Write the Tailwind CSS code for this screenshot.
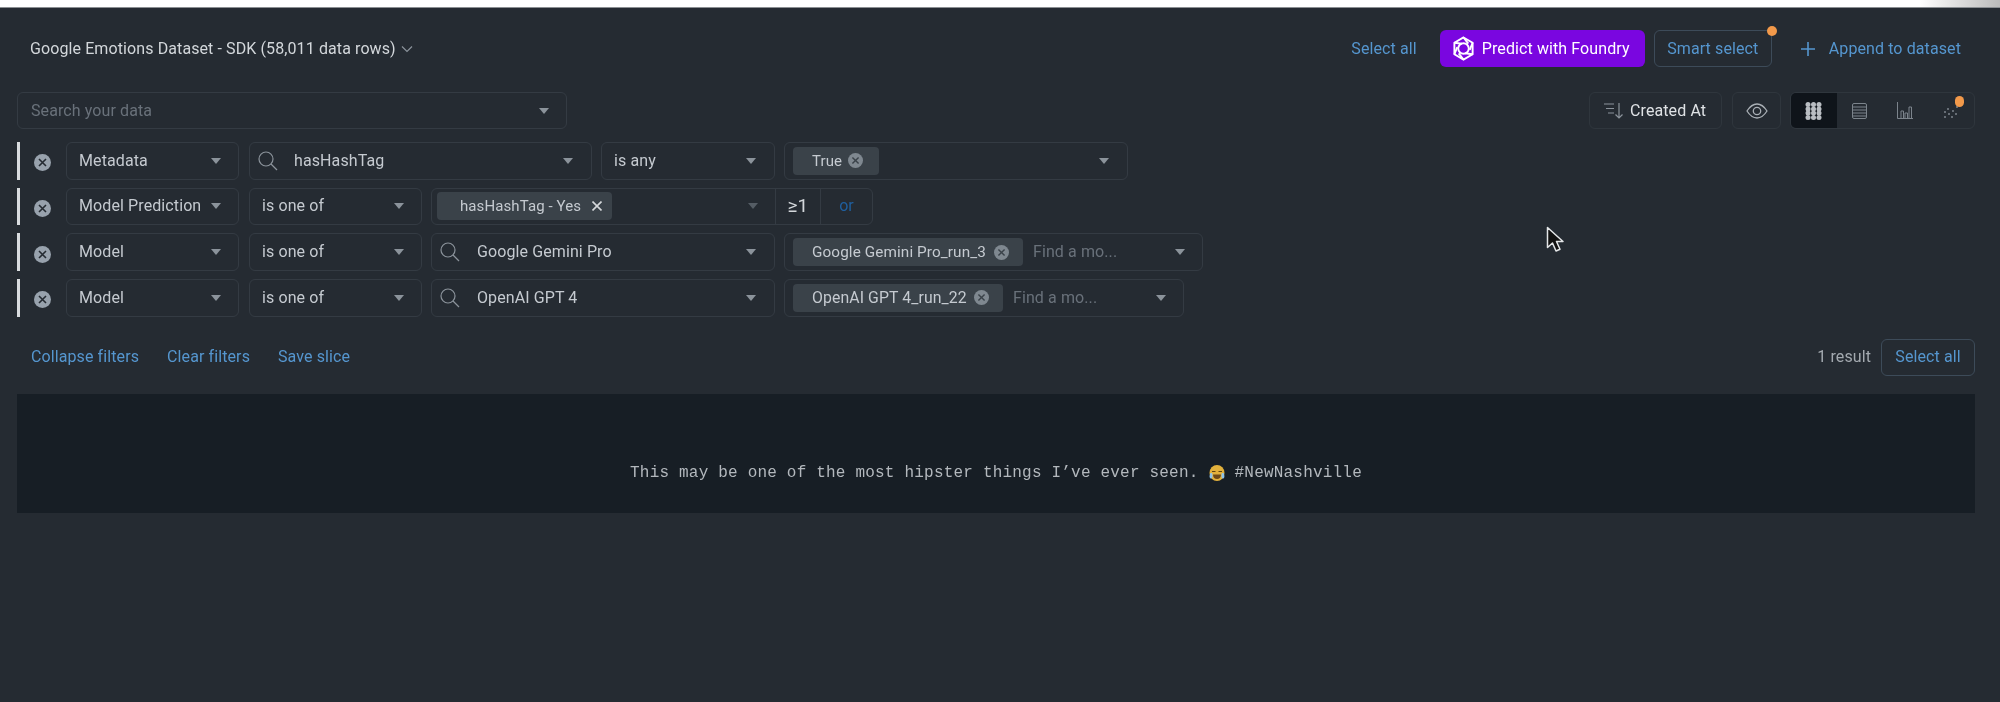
<!DOCTYPE html>
<html lang="en">
<head>
  <meta charset="UTF-8">
  <title>Google Emotions Dataset</title>
  <script src="https://cdn.jsdelivr.net/npm/@tailwindcss/browser@4"></script>
</head>
<body class="bg-[#252b32]">
  <div class="w-[2000px] h-[702px] overflow-hidden relative flex flex-col bg-[#252b32] font-['Roboto',sans-serif] text-[16px] tracking-[0.1px] text-[#c5cad0] blur-[0.4px]">
    <!-- top strip -->
    <div class="h-[8px] shrink-0 bg-gradient-to-r from-white from-[96%] to-[#bbbbbb] border-b border-[#8b8f93]"></div>

    <!-- header -->
    <div class="mt-[22px] h-[37px] flex items-center pl-[30px] pr-[39px]">
      <div class="flex items-center gap-[5px] text-[#d3d7db]">
        <span>Google Emotions Dataset - SDK (58,011 data rows)</span>
        <svg class="w-[12px] h-[8px] text-[#8b939b]" viewBox="0 0 12 8" fill="none" stroke="currentColor" stroke-width="1.2"><path d="M1 1.500l5 5 5-5"/></svg>
      </div>
      <div class="ml-auto flex items-center">
        <span class="text-[#5596cf]">Select all</span>
        <div class="ml-[23px] w-[205px] h-[37px] rounded-[6px] bg-[#7a06e0] flex items-center pl-[12px] gap-[7px] text-white">
          <svg class="w-[23px] h-[25px]" viewBox="0 0 24 26" fill="none" stroke="currentColor" stroke-width="2"><path d="M12 1.500l9.500 5.500v12L12 24.500 2.500 19V7z"/><circle cx="12" cy="13" r="5.500"/><path d="M12 1.500L17 8M21.500 7l-3 7.500M21.500 19l-8-1M12 24.500L7 18M2.500 19l3-7.500M2.500 7l8 1"/></svg>
          <span>Predict with Foundry</span>
        </div>
        <div class="ml-[9px] relative w-[118px] h-[37px] rounded-[6px] border border-[#3d4b59] flex items-center justify-center text-[#5596cf]">
          Smart select
          <span class="absolute -top-[5px] -right-[6px] w-[10px] h-[10px] rounded-full bg-[#f2994a]"></span>
        </div>
        <svg class="ml-[29px] w-[14px] h-[14px] text-[#5596cf]" viewBox="0 0 14 14" fill="none" stroke="currentColor" stroke-width="1.6"><path d="M7 0v14M0 7h14"/></svg>
        <span class="ml-[14px] text-[#5596cf]">Append to dataset</span>
      </div>
    </div>

    <!-- search row -->
    <div class="mt-[25px] h-[37px] flex items-center pl-[17px] pr-[25px]">
      <div class="w-[550px] h-[37px] rounded-[6px] border border-[#343b43] flex items-center pl-[13px] pr-[17px] justify-between text-[#69717a]">
        <span>Search your data</span>
        <svg class="w-[10px] h-[6px] text-[#8b939b]" viewBox="0 0 10 6" fill="currentColor"><path d="M0 0h10L5 6z"/></svg>
      </div>
      <div class="ml-auto w-[133px] h-[37px] rounded-[6px] border border-[#2f363d] flex items-center pl-[13px] gap-[6px] text-[#dfe2e5]">
        <svg class="w-[21px] h-[18px] text-[#8b939b]" viewBox="0 0 21 18" fill="none" stroke="currentColor" stroke-width="1.200"><path d="M1 2h10M3 6.500h8M5 11h6M16 1v15M12.500 12.500l3.500 3.500 3.500-3.500"/></svg>
        <span>Created At</span>
      </div>
      <div class="ml-[10px] w-[49px] h-[37px] rounded-[6px] border border-[#2f363d] flex items-center justify-center">
        <svg class="w-[22px] h-[16px] text-[#aab0b6]" viewBox="0 0 22 16" fill="none" stroke="currentColor" stroke-width="1.300"><path d="M1 8c3-4.700 6.300-7 10-7s7 2.300 10 7c-3 4.700-6.300 7-10 7S4 12.700 1 8z"/><circle cx="11" cy="8" r="3.700"/></svg>
      </div>
      <div class="ml-[9px] w-[185px] h-[37px] rounded-[6px] border border-[#2f363d] flex items-center overflow-hidden relative">
        <div class="w-[46px] h-full bg-[#0f141a] flex items-center justify-center">
          <svg class="w-[17px] h-[18px] text-[#b9bdc2]" viewBox="0 0 17 18" fill="currentColor"><circle cx="3" cy="2.500" r="2.500"/><circle cx="8.500" cy="2.500" r="2.500"/><circle cx="14" cy="2.500" r="2.500"/><circle cx="3" cy="7" r="2.500"/><circle cx="8.500" cy="7" r="2.500"/><circle cx="14" cy="7" r="2.500"/><circle cx="3" cy="11" r="2.500"/><circle cx="8.500" cy="11" r="2.500"/><circle cx="14" cy="11" r="2.500"/><circle cx="3" cy="15.500" r="2.500"/><circle cx="8.500" cy="15.500" r="2.500"/><circle cx="14" cy="15.500" r="2.500"/></svg>
        </div>
        <div class="w-[46px] flex justify-center">
          <svg class="w-[15px] h-[16px] text-[#7c848c]" viewBox="0 0 15 16" fill="none" stroke="currentColor" stroke-width="1"><rect x=".5" y=".5" width="14" height="15" rx="1.500"/><path d="M1 4h13M1 7h13M1 10h13M1 13h13"/></svg>
        </div>
        <div class="w-[46px] flex justify-center">
          <svg class="w-[16px] h-[17px] text-[#7c848c]" viewBox="0 0 16 17" fill="none" stroke="currentColor" stroke-width="1"><path d="M.5 0v16.500H16M4 16V9h2.500v7M8 16v-5h2.500v5M12 16V5h2.500v11"/></svg>
        </div>
        <div class="w-[46px] flex justify-center">
          <svg class="w-[16px] h-[17px] text-[#7c848c]" viewBox="0 0 16 17" fill="currentColor"><circle cx="2" cy="10" r="1"/><circle cx="2" cy="15" r="1"/><circle cx="5" cy="7" r="1"/><circle cx="6" cy="12" r="1"/><circle cx="9" cy="15" r="1"/><circle cx="10" cy="9" r="1"/><circle cx="13" cy="12" r="1"/><circle cx="14" cy="5" r="1"/></svg>
        </div>
        <span class="absolute top-[3px] right-[10px] w-[9px] h-[11px] rounded-full bg-[#f2994a]"></span>
      </div>
    </div>

    <!-- filters -->
    <div class="mt-[13px] flex flex-col gap-[8.2px] pl-[17px]">
      <!-- row 1 -->
      <div class="h-[37.5px] flex items-center">
        <div class="w-[3px] h-full bg-[#d9dcdf]"></div>
        <svg class="ml-[14px] mt-[4px] w-[17px] h-[17px]" viewBox="0 0 17 17"><circle cx="8.500" cy="8.500" r="8.500" fill="#98a2ad"/><path d="M5 5l7 7M12 5l-7 7" stroke="#252b32" stroke-width="1.600"/></svg>
        <div class="ml-[15px] w-[173px] h-full rounded-[6px] border border-[#343b43] flex items-center justify-between pl-[12px] pr-[17px]">
          <span>Metadata</span>
          <svg class="w-[10px] h-[6px] text-[#8b939b]" viewBox="0 0 10 6" fill="currentColor"><path d="M0 0h10L5 6z"/></svg>
        </div>
        <div class="ml-[10px] w-[343px] h-full rounded-[6px] border border-[#343b43] flex items-center pl-[8px] pr-[18px]">
          <svg class="w-[20px] h-[20px] text-[#8b939b]" viewBox="0 0 20 20" fill="none" stroke="currentColor" stroke-width="1.200"><circle cx="8" cy="8" r="7"/><path d="M13 13l6 6"/></svg>
          <span class="ml-[16px]">hasHashTag</span>
          <svg class="ml-auto w-[10px] h-[6px] text-[#8b939b]" viewBox="0 0 10 6" fill="currentColor"><path d="M0 0h10L5 6z"/></svg>
        </div>
        <div class="ml-[9px] w-[174px] h-full rounded-[6px] border border-[#343b43] flex items-center justify-between pl-[12px] pr-[18px]">
          <span>is any</span>
          <svg class="w-[10px] h-[6px] text-[#8b939b]" viewBox="0 0 10 6" fill="currentColor"><path d="M0 0h10L5 6z"/></svg>
        </div>
        <div class="ml-[9px] w-[344px] h-full rounded-[6px] border border-[#343b43] flex items-center pl-[8px] pr-[18px]">
          <div class="w-[86px] h-[28px] rounded-[4px] bg-[#3a4249] flex items-center pl-[19px] gap-[6px] text-[15px]">
            <span>True</span>
            <svg class="w-[15px] h-[15px]" viewBox="0 0 17 17"><circle cx="8.500" cy="8.500" r="8.500" fill="#7f8890"/><path d="M5 5l7 7M12 5l-7 7" stroke="#3a4249" stroke-width="1.600"/></svg>
          </div>
          <svg class="ml-auto w-[10px] h-[6px] text-[#8b939b]" viewBox="0 0 10 6" fill="currentColor"><path d="M0 0h10L5 6z"/></svg>
        </div>
      </div>
      <!-- row 2 -->
      <div class="h-[37.5px] flex items-center">
        <div class="w-[3px] h-full bg-[#d9dcdf]"></div>
        <svg class="ml-[14px] mt-[4px] w-[17px] h-[17px]" viewBox="0 0 17 17"><circle cx="8.500" cy="8.500" r="8.500" fill="#98a2ad"/><path d="M5 5l7 7M12 5l-7 7" stroke="#252b32" stroke-width="1.600"/></svg>
        <div class="ml-[15px] w-[173px] h-full rounded-[6px] border border-[#343b43] flex items-center justify-between pl-[12px] pr-[17px]">
          <span>Model Prediction</span>
          <svg class="w-[10px] h-[6px] text-[#8b939b]" viewBox="0 0 10 6" fill="currentColor"><path d="M0 0h10L5 6z"/></svg>
        </div>
        <div class="ml-[10px] w-[173px] h-full rounded-[6px] border border-[#343b43] flex items-center justify-between pl-[12px] pr-[17px]">
          <span>is one of</span>
          <svg class="w-[10px] h-[6px] text-[#8b939b]" viewBox="0 0 10 6" fill="currentColor"><path d="M0 0h10L5 6z"/></svg>
        </div>
        <div class="ml-[9px] w-[442px] h-full rounded-[6px] border border-[#343b43] flex items-center">
          <div class="w-[343px] h-full flex items-center pl-[5px] pr-[17px]">
            <div class="w-[175px] h-[28px] rounded-[4px] bg-[#3a4249] flex items-center pl-[23px] text-[15px]">
              <span>hasHashTag - Yes</span>
              <svg class="ml-auto mr-[10px] w-[10px] h-[10px] text-[#d5d8db]" viewBox="0 0 10 10" fill="none" stroke="currentColor" stroke-width="1.600"><path d="M.5.5l9 9M9.500.5l-9 9"/></svg>
            </div>
            <svg class="ml-auto w-[10px] h-[6px] text-[#555d65]" viewBox="0 0 10 6" fill="currentColor"><path d="M0 0h10L5 6z"/></svg>
          </div>
          <div class="w-[46px] h-full border-x border-[#343b43] flex items-center justify-center text-[19px] text-[#d3d7db]">≥1</div>
          <div class="flex-1 flex items-center justify-center text-[#1f5f9e]">or</div>
        </div>
      </div>
      <!-- row 3 -->
      <div class="h-[37.5px] flex items-center">
        <div class="w-[3px] h-full bg-[#d9dcdf]"></div>
        <svg class="ml-[14px] mt-[4px] w-[17px] h-[17px]" viewBox="0 0 17 17"><circle cx="8.500" cy="8.500" r="8.500" fill="#98a2ad"/><path d="M5 5l7 7M12 5l-7 7" stroke="#252b32" stroke-width="1.600"/></svg>
        <div class="ml-[15px] w-[173px] h-full rounded-[6px] border border-[#343b43] flex items-center justify-between pl-[12px] pr-[17px]">
          <span>Model</span>
          <svg class="w-[10px] h-[6px] text-[#8b939b]" viewBox="0 0 10 6" fill="currentColor"><path d="M0 0h10L5 6z"/></svg>
        </div>
        <div class="ml-[10px] w-[173px] h-full rounded-[6px] border border-[#343b43] flex items-center justify-between pl-[12px] pr-[17px]">
          <span>is one of</span>
          <svg class="w-[10px] h-[6px] text-[#8b939b]" viewBox="0 0 10 6" fill="currentColor"><path d="M0 0h10L5 6z"/></svg>
        </div>
        <div class="ml-[9px] w-[344px] h-full rounded-[6px] border border-[#343b43] flex items-center pl-[8px] pr-[18px]">
          <svg class="w-[20px] h-[20px] text-[#8b939b]" viewBox="0 0 20 20" fill="none" stroke="currentColor" stroke-width="1.200"><circle cx="8" cy="8" r="7"/><path d="M13 13l6 6"/></svg>
          <span class="ml-[17px]">Google Gemini Pro</span>
          <svg class="ml-auto w-[10px] h-[6px] text-[#8b939b]" viewBox="0 0 10 6" fill="currentColor"><path d="M0 0h10L5 6z"/></svg>
        </div>
        <div class="ml-[9px] w-[419px] h-full rounded-[6px] border border-[#343b43] flex items-center pl-[8px] pr-[17px]">
          <div class="w-[230px] h-[28px] rounded-[4px] bg-[#3a4249] flex items-center pl-[19px] text-[15.3px]">
            <span>Google Gemini Pro_run_3</span>
            <svg class="ml-auto mr-[14px] w-[15px] h-[15px]" viewBox="0 0 17 17"><circle cx="8.500" cy="8.500" r="8.500" fill="#7f8890"/><path d="M5 5l7 7M12 5l-7 7" stroke="#3a4249" stroke-width="1.600"/></svg>
          </div>
          <span class="ml-[10px] text-[#69717a]">Find a mo...</span>
          <svg class="ml-auto w-[10px] h-[6px] text-[#8b939b]" viewBox="0 0 10 6" fill="currentColor"><path d="M0 0h10L5 6z"/></svg>
        </div>
      </div>
      <!-- row 4 -->
      <div class="h-[37.5px] flex items-center">
        <div class="w-[3px] h-full bg-[#d9dcdf]"></div>
        <svg class="ml-[14px] mt-[4px] w-[17px] h-[17px]" viewBox="0 0 17 17"><circle cx="8.500" cy="8.500" r="8.500" fill="#98a2ad"/><path d="M5 5l7 7M12 5l-7 7" stroke="#252b32" stroke-width="1.600"/></svg>
        <div class="ml-[15px] w-[173px] h-full rounded-[6px] border border-[#343b43] flex items-center justify-between pl-[12px] pr-[17px]">
          <span>Model</span>
          <svg class="w-[10px] h-[6px] text-[#8b939b]" viewBox="0 0 10 6" fill="currentColor"><path d="M0 0h10L5 6z"/></svg>
        </div>
        <div class="ml-[10px] w-[173px] h-full rounded-[6px] border border-[#343b43] flex items-center justify-between pl-[12px] pr-[17px]">
          <span>is one of</span>
          <svg class="w-[10px] h-[6px] text-[#8b939b]" viewBox="0 0 10 6" fill="currentColor"><path d="M0 0h10L5 6z"/></svg>
        </div>
        <div class="ml-[9px] w-[344px] h-full rounded-[6px] border border-[#343b43] flex items-center pl-[8px] pr-[18px]">
          <svg class="w-[20px] h-[20px] text-[#8b939b]" viewBox="0 0 20 20" fill="none" stroke="currentColor" stroke-width="1.200"><circle cx="8" cy="8" r="7"/><path d="M13 13l6 6"/></svg>
          <span class="ml-[17px]">OpenAI GPT 4</span>
          <svg class="ml-auto w-[10px] h-[6px] text-[#8b939b]" viewBox="0 0 10 6" fill="currentColor"><path d="M0 0h10L5 6z"/></svg>
        </div>
        <div class="ml-[9px] w-[400px] h-full rounded-[6px] border border-[#343b43] flex items-center pl-[8px] pr-[17px]">
          <div class="w-[210px] h-[28px] rounded-[4px] bg-[#3a4249] flex items-center pl-[19px] text-[15.8px]">
            <span>OpenAI GPT 4_run_22</span>
            <svg class="ml-auto mr-[14px] w-[15px] h-[15px]" viewBox="0 0 17 17"><circle cx="8.500" cy="8.500" r="8.500" fill="#7f8890"/><path d="M5 5l7 7M12 5l-7 7" stroke="#3a4249" stroke-width="1.600"/></svg>
          </div>
          <span class="ml-[10px] text-[#69717a]">Find a mo...</span>
          <svg class="ml-auto w-[10px] h-[6px] text-[#8b939b]" viewBox="0 0 10 6" fill="currentColor"><path d="M0 0h10L5 6z"/></svg>
        </div>
      </div>
    </div>

    <!-- filter actions -->
    <div class="mt-[22.4px] h-[37px] flex items-center pl-[31px] pr-[25px] text-[#5596cf]">
      <span>Collapse filters</span>
      <span class="ml-[28px]">Clear filters</span>
      <span class="ml-[28px]">Save slice</span>
      <span class="ml-auto text-[#a3a9af]">1 result</span>
      <div class="ml-[10px] w-[94px] h-[37px] rounded-[6px] border border-[#3d4b59] flex items-center justify-center">Select all</div>
    </div>

    <!-- result -->
    <div class="mt-[18px] ml-[17px] mr-[25px] h-[119px] pt-[40px] bg-[#171e25] flex items-center justify-center font-['Liberation_Mono',monospace] text-[16px] tracking-[0.2px] text-[#b3b8bd]">
      <span>This may be one of the most hipster things I’ve ever seen.</span>
      <svg class="mx-[10px] w-[16px] h-[18px]" viewBox="0 0 16 18"><ellipse cx="8" cy="9" rx="7.500" ry="8" fill="#e2b13c"/><path d="M3 7.500h3.500M9.500 7.500H13" stroke="#5b4515" stroke-width="1.200"/><path d="M4 10.500h8c0 3-1.700 4.500-4 4.500s-4-1.500-4-4.500z" fill="#6d4a1a"/><path d="M1.500 9c-1.500 3-1 5.500.5 5.500S4 12 3 9zM14.500 9c1.500 3 1 5.500-.5 5.500S12 12 13 9z" fill="#8fc3e8"/></svg>
      <span>#NewNashville</span>
    </div>

    <!-- mouse pointer -->
    <svg class="absolute left-[1546px] top-[226px] w-[18px] h-[27px]" viewBox="0 0 18 27"><path d="M1.500 1.500v20l5-4.500 3.500 8 4-1.800-3.500-7.700h6.500z" fill="#111" stroke="#e4e6e8" stroke-width="1.500" stroke-linejoin="round"/></svg>
  </div>
</body>
</html>
